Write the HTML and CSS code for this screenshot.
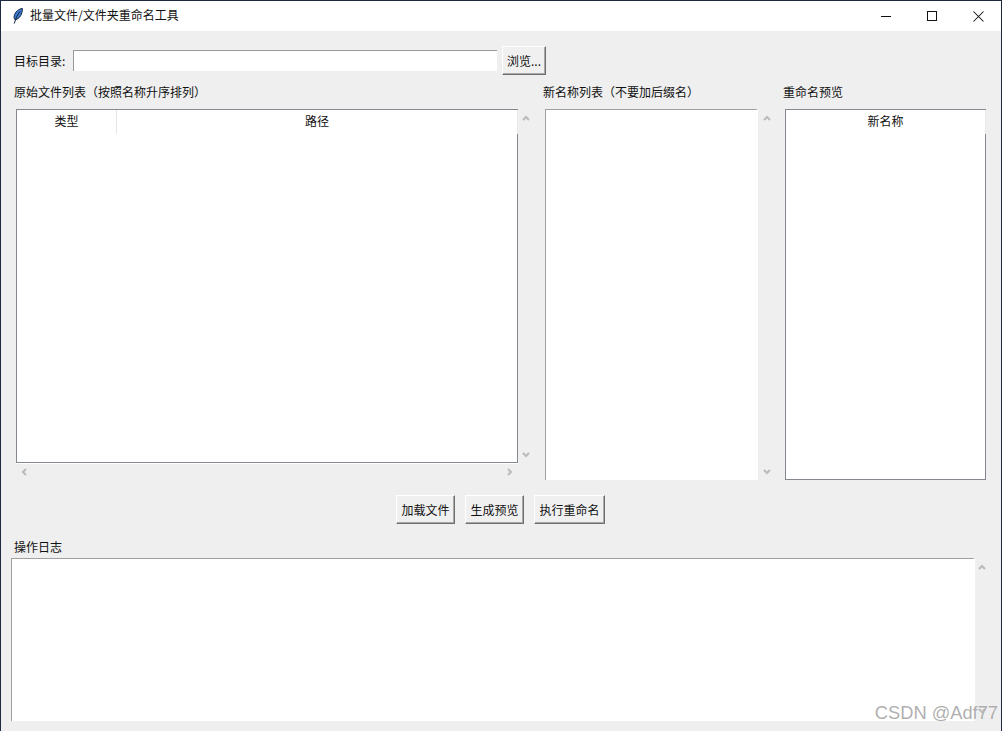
FILE: index.html
```html
<!DOCTYPE html>
<html lang="zh-CN">
<head>
<meta charset="utf-8">
<title>批量文件/文件夹重命名工具</title>
<link rel="stylesheet" href="styles.css">
</head>
<body>
<svg class="defs" width="0" height="0" aria-hidden="true">
  <symbol id="up" viewBox="0 0 8 6"><path d="M1 5 4 2l3 3" fill="none" stroke="#bcbcbc" stroke-width="2.2"/></symbol>
  <symbol id="down" viewBox="0 0 8 6"><path d="M1 1l3 3 3-3" fill="none" stroke="#bcbcbc" stroke-width="2.2"/></symbol>
  <symbol id="left" viewBox="0 0 6 8"><path d="M5 1 2 4l3 3" fill="none" stroke="#bcbcbc" stroke-width="2.2"/></symbol>
  <symbol id="right" viewBox="0 0 6 8"><path d="M1 1l3 3-3 3" fill="none" stroke="#bcbcbc" stroke-width="2.2"/></symbol>
</svg>
<div class="window">
  <header class="titlebar">
    <svg class="app-icon" width="10" height="16" viewBox="0 0 10 16">
      <path d="M9.4.5C5.800.8 2 3.800 1.200 8c-.3 1.700 0 3 .8 3.700 3.300-.3 5.800-3.200 6.800-6.700.4-1.500.6-3 .6-4.500Z" fill="#3f7bd0" stroke="#13233f" stroke-width="1"/>
      <path d="M7 3.500 3.700 8.500 1.200 15.500" fill="none" stroke="#13233f" stroke-width="1"/>
    </svg>
    <span class="title">批量文件/文件夹重命名工具</span>
    <div class="controls">
      <div class="control"><svg width="11" height="11" viewBox="0 0 11 11"><path d="M0 5.500h10" stroke="#111" fill="none"/></svg></div>
      <div class="control"><svg width="11" height="11" viewBox="0 0 11 11"><rect x=".5" y=".5" width="9" height="9" stroke="#111" fill="none"/></svg></div>
      <div class="control"><svg width="11" height="11" viewBox="0 0 11 11"><path d="M.5.500l10 10M10.500.500l-10 10" stroke="#111" fill="none" stroke-width="1.050"/></svg></div>
    </div>
  </header>
  <main class="content">
    <div class="dir-row">
      <label class="dir-label">目标目录:</label>
      <div class="entry"></div>
      <button class="btn btn-browse">浏览...</button>
    </div>
    <div class="panels">
      <section class="panel">
        <div class="label">原始文件列表（按照名称升序排列）</div>
        <div class="tree-row tree-row-first">
          <div class="tree">
            <div class="tree-head">
              <div class="th th-type">类型</div>
              <div class="th th-path">路径</div>
            </div>
          </div>
          <div class="vbar"><svg width="8" height="6"><use href="#up"/></svg><svg width="8" height="6"><use href="#down"/></svg></div>
        </div>
        <div class="hbar"><svg width="6" height="8"><use href="#left"/></svg><svg width="6" height="8"><use href="#right"/></svg></div>
      </section>
      <section class="panel">
        <div class="label">新名称列表（不要加后缀名）</div>
        <div class="tree-row tree-row-tall">
          <div class="listbox"></div>
          <div class="vbar vbar-list"><svg width="8" height="6"><use href="#up"/></svg><svg width="8" height="6"><use href="#down"/></svg></div>
        </div>
      </section>
      <section class="panel">
        <div class="label">重命名预览</div>
        <div class="tree-row tree-row-tall">
          <div class="tree">
            <div class="tree-head"><div class="th th-fill">新名称</div></div>
          </div>
        </div>
      </section>
    </div>
    <div class="actions">
      <button class="btn">加载文件</button>
      <button class="btn">生成预览</button>
      <button class="btn">执行重命名</button>
    </div>
    <div class="log-label">操作日志</div>
    <div class="log-row">
      <div class="log"></div>
      <div class="vbar vbar-log"><svg width="8" height="6"><use href="#up"/></svg><svg width="8" height="6"><use href="#down"/></svg></div>
    </div>
  </main>
  <div class="watermark">CSDN @Adf77</div>
</div>
</body>
</html>
```
FILE: styles.css
```css
* { box-sizing: border-box; }
html, body { margin: 0; height: 100%; }
body {
  background: #1d2b3e;
  overflow: hidden;
  font-family: "Noto Sans CJK SC", "Noto Sans", sans-serif;
  font-size: 12px;
  color: #111;
}
.defs { position: absolute; }
.window {
  position: relative;
  margin: 1px 0 0 1px;
  width: 1000px;
  height: 730px;
  background: #efefef;
}
.titlebar {
  display: flex;
  align-items: center;
  height: 30px;
  background: #fff;
  padding-left: 12px;
}
.app-icon { flex: none; margin-right: 7px; }
.title { line-height: 28px; height: 30px; }
.controls { display: flex; margin-left: auto; }
.control {
  width: 46px;
  height: 30px;
  display: flex;
  align-items: center;
  justify-content: center;
}
.content { padding: 15px 0 0 10px; }
.dir-row { display: flex; align-items: center; height: 29px; padding-left: 3px; }
.dir-label { width: 59px; line-height: 17px; }
.entry {
  width: 424px;
  height: 21px;
  background: #fff;
  border-top: 1px solid #9a9a9a;
  border-left: 1px solid #9a9a9a;
  margin-right: 5px;
}
.btn {
  height: 29px;
  padding: 0 4.5px;
  font: inherit;
  color: inherit;
  line-height: 17px;
  background: #f0f0f0;
  border: 1px solid;
  border-color: #fff #6f6f6f #6f6f6f #fff;
  box-shadow: inset -1px -1px 0 #a8a8a8;
  white-space: nowrap;
}
.btn-browse { width: 44px; padding: 0; }
.panels {
  display: grid;
  grid-template-columns: 529px 240px 203px;
  margin: 9px 0 0 3px;
}
.label { height: 17px; line-height: 15px; margin-bottom: 8px; }
.tree-row { display: flex; margin-left: 2px; }
.tree-row-first { height: 354px; }
.tree-row-tall { height: 371px; }
.tree {
  flex: 1;
  background: #fff;
  border: 1px solid #84888f;
  min-width: 0;
}
.tree-row-first .tree { flex: none; width: 502px; }
.tree-head {
  display: flex;
  height: 24px;
  margin-right: -1px;
  border-right: 1px solid #ebebeb;
  background: #fff;
  position: relative;
}
.th { line-height: 22px; text-align: center; }
.th-type { width: 100px; height: 24px; border-right: 1px solid #e6e6e6; }
.th-path, .th-fill { flex: 1; }
.vbar {
  display: flex;
  flex-direction: column;
  justify-content: space-between;
  padding: 6px 0 5px 4px;
}
.vbar-list { padding-left: 5px; }
.vbar-log { padding: 6px 0 7px 3px; }
.hbar {
  display: flex;
  justify-content: space-between;
  width: 502px;
  height: 17px;
  margin-left: 2px;
  padding: 4px 5px 0;
  border-top: 1px solid #fff;
}
.listbox {
  width: 213px;
  background: #fff;
  border-top: 1px solid #a0a0a0;
  border-left: 1px solid #a0a0a0;
  border-right: 2px solid #fff;
}
.actions {
  display: flex;
  justify-content: center;
  gap: 10px;
  margin-top: 15px;
  padding-right: 11px;
}
.log-label { margin: 15px 0 3px 3px; height: 16px; line-height: 16px; }
.log-row { display: flex; height: 163px; }
.log {
  width: 964px;
  background: #fff;
  border-top: 1px solid #a0a0a0;
  border-left: 1px solid #a0a0a0;
  border-right: 2px solid #fff;
}
.watermark {
  position: absolute;
  right: 3px;
  top: 701px;
  font-family: "Liberation Sans", Arial, sans-serif;
  font-size: 18.3px;
  line-height: 22px;
  color: rgba(120, 120, 120, 0.6);
  text-shadow: 0 0 1px rgba(255, 255, 255, 0.7);
  white-space: nowrap;
}
```
